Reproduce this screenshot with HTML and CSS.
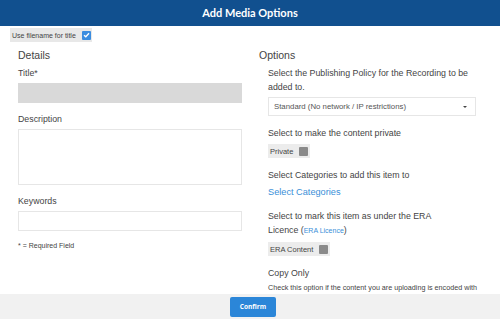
FILE: index.html
```html
<!DOCTYPE html>
<html lang="en">
<head>
    <meta charset="UTF-8">
    <title>Add Media Options</title>
    <link rel="stylesheet" href="styles.css">
</head>
<body>
    <div class="modal">
        <div class="modal-header">Add Media Options</div>
        <div class="modal-body">
            <label class="use-filename">
                <span>Use filename for title</span>
                <span class="check checked">
                    <svg width="7" height="6" viewBox="0 0 7 6"><path d="M1 3.2 L2.8 4.8 L6 1.2" fill="none" stroke="#fff" stroke-width="1.3"/></svg>
                </span>
            </label>
            <div class="columns">
                <div class="col details">
                    <h2>Details</h2>
                    <div class="field-label">Title*</div>
                    <div class="input disabled"></div>
                    <div class="field-label">Description</div>
                    <div class="input textarea"></div>
                    <div class="field-label">Keywords</div>
                    <div class="input"></div>
                    <p class="note">* = Required Field</p>
                </div>
                <div class="col options">
                    <h2>Options</h2>
                    <div class="opt">
                        <p>Select the Publishing Policy for the Recording to be added to.</p>
                        <div class="select">
                            <span>Standard (No network / IP restrictions)</span>
                            <span class="caret"></span>
                        </div>
                    </div>
                    <div class="opt">
                        <p>Select to make the content private</p>
                        <span class="toggle">Private <span class="check"></span></span>
                    </div>
                    <div class="opt">
                        <p>Select Categories to add this item to</p>
                        <a class="link" href="javascript:;">Select Categories</a>
                    </div>
                    <div class="opt">
                        <p>Select to mark this item as under the ERA<br>Licence (<a class="small-link" href="javascript:;">ERA Licence</a>)</p>
                        <span class="toggle">ERA Content <span class="check"></span></span>
                    </div>
                    <div class="opt">
                        <p>Copy Only</p>
                        <p class="hint">Check this option if the content you are uploading is encoded with</p>
                    </div>
                </div>
            </div>
        </div>
        <div class="modal-footer">
            <button class="btn">Confirm</button>
        </div>
    </div>
</body>
</html>
```

FILE: styles.css
```css
* {
    box-sizing: border-box;
}
body {
    margin: 0;
    font-family: "Liberation Sans", Arial, sans-serif;
    color: #444;
    background: #fff;
}
.modal {
    width: 500px;
    height: 319px;
    display: flex;
    flex-direction: column;
    overflow: hidden;
}
.modal-header {
    height: 26px;
    flex: none;
    background: #11508f;
    color: #fff;
    font-family: Lato, sans-serif;
    font-weight: bold;
    font-size: 11px;
    line-height: 26px;
    text-align: center;
}
.modal-body {
    flex: 1;
    overflow: hidden;
    padding: 2px 0 0 10px;
}
.use-filename {
    display: flex;
    width: fit-content;
    align-items: center;
    gap: 6px;
    height: 14px;
    padding: 0 1px 0 2px;
    background: #e8e8e8;
    font-size: 7px;
    color: #444;
}
.check {
    display: inline-flex;
    align-items: center;
    justify-content: center;
    width: 9px;
    height: 9px;
    background: #8a8a8a;
    border-radius: 1px;
}
.check.checked {
    background: #3b8de0;
}
.columns {
    display: flex;
    gap: 17px;
    padding-left: 8px;
}
.col h2 {
    margin: 5px 0 0;
    font-size: 10.5px;
    font-weight: normal;
    color: #444;
    line-height: 16px;
}
.details {
    width: 224px;
}
.field-label {
    font-size: 8.8px;
    line-height: 12px;
    margin: 4px 0 4px;
}
.details .field-label ~ .field-label {
    margin-top: 5px;
}
.input {
    height: 20px;
    border: 1px solid #e6e6e6;
    margin-bottom: 10px;
}
.input.disabled {
    background: #d9d9d9;
    border-color: #d9d9d9;
}
.input.textarea {
    height: 56px;
}
.note {
    margin: 0;
    font-size: 7px;
    line-height: 10px;
}
.options {
    width: 226px;
}
.opt {
    padding-left: 9px;
    margin-top: 10px;
}
.opt:first-of-type {
    margin-top: 3px;
}
.opt p {
    margin: 0 0 3px;
    font-size: 8.8px;
    line-height: 14px;
    color: #444;
}
.select {
    display: flex;
    justify-content: space-between;
    align-items: center;
    width: 208px;
    height: 19px;
    padding: 0 8px 0 5px;
    border: 1px solid #e6e6e6;
    font-size: 7.8px;
    color: #555;
}
.caret {
    width: 0;
    height: 0;
    border-left: 2px solid transparent;
    border-right: 2px solid transparent;
    border-top: 2px solid #444;
}
.toggle {
    display: flex;
    width: fit-content;
    align-items: center;
    gap: 6px;
    height: 14px;
    margin: 4px 0 3px;
    padding: 0 2px;
    background: #ececec;
    font-size: 7.5px;
    color: #444;
}
.link {
    display: block;
    font-size: 9.2px;
    color: #3a8fd8;
    text-decoration: none;
    line-height: 14px;
}
.small-link {
    font-size: 7px;
    color: #3a8fd8;
    text-decoration: none;
}
.opt .hint {
    font-size: 7.2px;
    line-height: 10px;
}
.modal-footer {
    height: 25px;
    flex: none;
    background: #f1f1f1;
    display: flex;
    justify-content: center;
    align-items: center;
}
.btn {
    width: 46px;
    height: 20px;
    border: none;
    border-radius: 2px;
    background: #2b86d8;
    color: #fff;
    font-family: "Open Sans", sans-serif;
    font-weight: bold;
    font-size: 6.5px;
    margin-left: 6px;
}
```
